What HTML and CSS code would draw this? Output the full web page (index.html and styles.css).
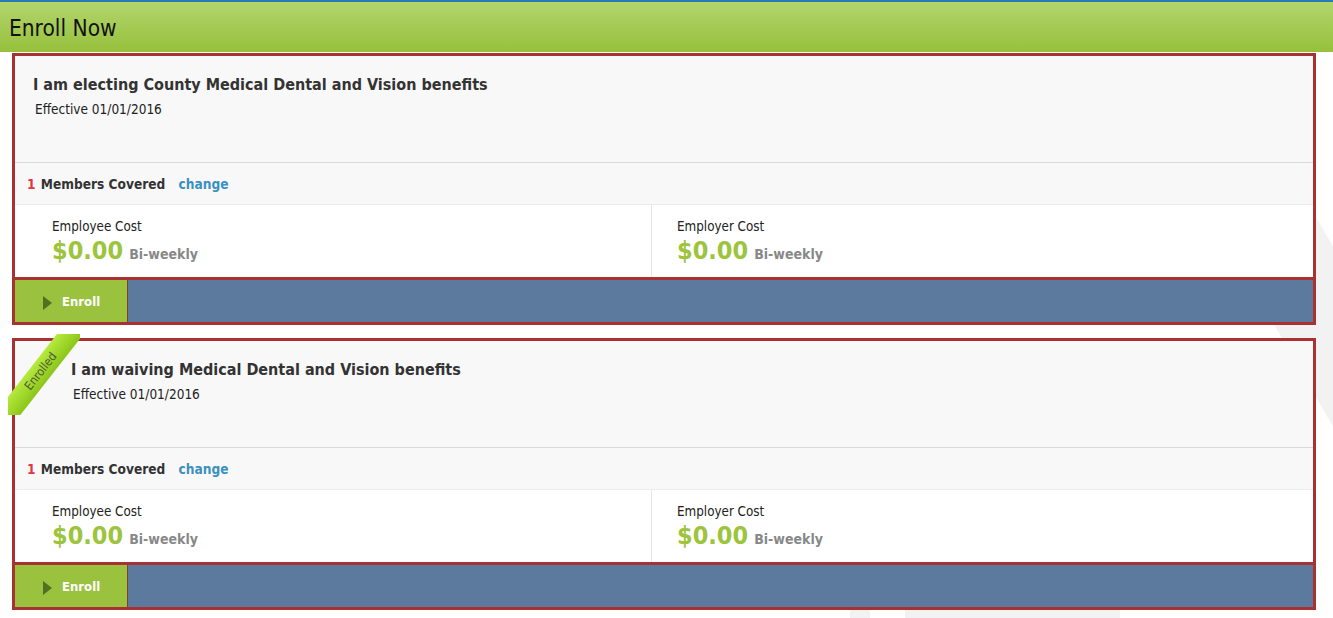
FILE: index.html
```html
<!DOCTYPE html>
<html>
<head>
<meta charset="utf-8">
<title>Enroll Now</title>
<link rel="stylesheet" href="styles.css">
</head>
<body>
<div class="watermark"><div class="wm wm1"></div><div class="wm wm2"></div><div class="wm wm3"></div></div>
<header class="topbar">Enroll Now</header>
<main class="cards">
  <section class="card">
    <div class="card-head">
      <h2 class="title">I am electing County Medical Dental and Vision benefits</h2>
      <p class="effective">Effective 01/01/2016</p>
    </div>
    <div class="members"><span class="count">1</span> Members Covered <a class="change" href="#">change</a></div>
    <div class="costs">
      <div class="cost cost-left">
        <div class="cost-label">Employee Cost</div>
        <div class="cost-value"><span class="amount">$0.00</span> <span class="period">Bi-weekly</span></div>
      </div>
      <div class="cost cost-right">
        <div class="cost-label">Employer Cost</div>
        <div class="cost-value"><span class="amount">$0.00</span> <span class="period">Bi-weekly</span></div>
      </div>
    </div>
    <div class="enroll-bar">
      <button class="enroll-btn"><span class="tri"></span>Enroll</button>
    </div>
  </section>
  <section class="card">
    <div class="ribbon-wrap"><div class="ribbon">Enrolled</div></div>
    <div class="card-head card-head-ribbon">
      <h2 class="title">I am waiving Medical Dental and Vision benefits</h2>
      <p class="effective">Effective 01/01/2016</p>
    </div>
    <div class="members"><span class="count">1</span> Members Covered <a class="change" href="#">change</a></div>
    <div class="costs">
      <div class="cost cost-left">
        <div class="cost-label">Employee Cost</div>
        <div class="cost-value"><span class="amount">$0.00</span> <span class="period">Bi-weekly</span></div>
      </div>
      <div class="cost cost-right">
        <div class="cost-label">Employer Cost</div>
        <div class="cost-value"><span class="amount">$0.00</span> <span class="period">Bi-weekly</span></div>
      </div>
    </div>
    <div class="enroll-bar">
      <button class="enroll-btn"><span class="tri"></span>Enroll</button>
    </div>
  </section>
</main>
</body>
</html>
```
FILE: styles.css
```css
html, body {
  margin: 0;
  padding: 0;
  background: #fff;
}
body {
  font-family: "DejaVu Sans Condensed", "DejaVu Sans", sans-serif;
  color: #333;
  position: relative;
  height: 618px;
  overflow: hidden;
}
.watermark {
  position: absolute;
  inset: 0;
  z-index: 0;
  overflow: hidden;
  pointer-events: none;
}
.wm {
  position: absolute;
  background: #f2f2f2;
}
.wm1 { left: 1290px; top: 60px; width: 90px; height: 560px; transform: rotate(-30deg); }
.wm2 { left: 850px; top: 609px; width: 20px; height: 20px; }
.wm3 { left: 905px; top: 609px; width: 215px; height: 20px; }
.topbar {
  position: relative;
  z-index: 1;
  border-top: 2px solid #2a7ab8;
  height: 50px;
  line-height: 53px;
  padding-left: 9px;
  font-size: 22.5px;
  color: #111;
  background: linear-gradient(#b2d56c, #97c03c);
}
.cards {
  position: relative;
  z-index: 1;
  display: flex;
  flex-direction: column;
  gap: 13px;
  padding: 1px 17px 0 12px;
}
.card {
  position: relative;
  border: 3px solid #a83232;
  background: #fff;
}
.card-head {
  height: 107px;
  box-sizing: border-box;
  padding: 19px 0 0 18px;
  background: #f8f8f8;
  border-bottom: 1px solid #d9d9d9;
}
.card-head-ribbon {
  padding-left: 56px;
}
.title {
  margin: 0;
  font-size: 16px;
  line-height: 20px;
  font-weight: bold;
  color: #333;
}
.effective {
  margin: 6px 0 0 2px;
  font-size: 13.5px;
  line-height: 17px;
  color: #222;
}
.members {
  height: 42px;
  line-height: 42px;
  box-sizing: border-box;
  padding-left: 12px;
  background: #f8f8f8;
  border-bottom: 1px solid #ebebeb;
  font-size: 13.6px;
  font-weight: bold;
  color: #333;
}
.count {
  color: #e0383e;
  margin-right: 1px;
}
.change {
  color: #3a90c0;
  text-decoration: none;
  margin-left: 9px;
}
.costs {
  display: grid;
  grid-template-columns: 49% 51%;
  height: 72px;
}
.cost {
  box-sizing: border-box;
  padding-top: 14px;
}
.cost-left { padding-left: 37px; }
.cost-right { padding-left: 25px; border-left: 1px solid #e6e6e6; }
.cost-label {
  font-size: 13.3px;
  line-height: 16px;
  color: #222;
}
.cost-value {
  margin-top: 1px;
  display: flex;
  align-items: baseline;
  gap: 6px;
}
.amount {
  font-size: 25px;
  line-height: 30px;
  font-weight: bold;
  color: #9cc43c;
}
.period {
  font-size: 14px;
  font-weight: bold;
  color: #888;
}
.enroll-bar {
  border-top: 3px solid #a83232;
  height: 42px;
  background: #5c7a9e;
  display: flex;
}
.enroll-btn {
  width: 113px;
  height: 42px;
  border: 0;
  border-right: 1px solid #8e3a2a;
  background: #9bc23f;
  color: #fff;
  font-family: inherit;
  font-size: 13px;
  font-weight: bold;
  display: flex;
  align-items: center;
  padding: 0 0 0 28px;
  cursor: pointer;
}
.tri {
  width: 0;
  height: 0;
  border-top: 7px solid transparent;
  border-bottom: 7px solid transparent;
  border-left: 9px solid #4f7121;
  margin-right: 10px;
  margin-top: 3px;
}
.ribbon-wrap {
  position: absolute;
  left: -7px;
  top: -7px;
  width: 72px;
  height: 81px;
  overflow: hidden;
  z-index: 2;
}
.ribbon {
  position: absolute;
  left: -27px;
  top: 27px;
  width: 120px;
  height: 21px;
  line-height: 21px;
  text-align: center;
  font-size: 12px;
  color: #4f5a3a;
  background: linear-gradient(#b6ea3e, #8cc61a);
  transform: rotate(-52deg);
}
```
